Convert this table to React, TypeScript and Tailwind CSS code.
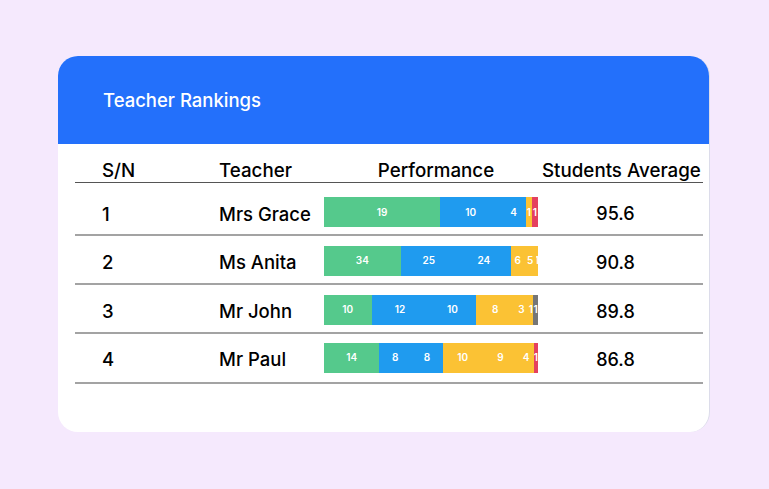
const SEG_COLORS: Record<string, string> = {
  g: 'bg-[#55c98c]',
  b: 'bg-[#1f9bef]',
  y: 'bg-[#fbc234]',
  r: 'bg-[#e4405f]',
  k: 'bg-[#767676]',
};

type Segment = { v: number; c: keyof typeof SEG_COLORS };

const rows: { sn: number; name: string; avg: string; segs: Segment[] }[] = [
  {
    sn: 1,
    name: 'Mrs Grace',
    avg: '95.6',
    segs: [
      { v: 19, c: 'g' },
      { v: 10, c: 'b' },
      { v: 4, c: 'b' },
      { v: 1, c: 'y' },
      { v: 1, c: 'r' },
    ],
  },
  {
    sn: 2,
    name: 'Ms Anita',
    avg: '90.8',
    segs: [
      { v: 34, c: 'g' },
      { v: 25, c: 'b' },
      { v: 24, c: 'b' },
      { v: 6, c: 'y' },
      { v: 5, c: 'y' },
      { v: 1, c: 'y' },
    ],
  },
  {
    sn: 3,
    name: 'Mr John',
    avg: '89.8',
    segs: [
      { v: 10, c: 'g' },
      { v: 12, c: 'b' },
      { v: 10, c: 'b' },
      { v: 8, c: 'y' },
      { v: 3, c: 'y' },
      { v: 1, c: 'y' },
      { v: 1, c: 'k' },
    ],
  },
  {
    sn: 4,
    name: 'Mr Paul',
    avg: '86.8',
    segs: [
      { v: 14, c: 'g' },
      { v: 8, c: 'b' },
      { v: 8, c: 'b' },
      { v: 10, c: 'y' },
      { v: 9, c: 'y' },
      { v: 4, c: 'y' },
      { v: 1, c: 'r' },
    ],
  },
];

function StackedBar({ segs }: { segs: Segment[] }) {
  const total = segs.reduce((s, x) => s + x.v, 0);
  return (
    <div className="flex h-[30px] w-[214px] overflow-hidden">
      {segs.map((s, i) => (
        <div
          key={i}
          className={`${SEG_COLORS[s.c]} flex items-center justify-center text-[10px] font-semibold text-white overflow-hidden`}
          style={{ width: `${(s.v / total) * 100}%` }}
        >
          {s.v}
        </div>
      ))}
    </div>
  );
}

export default function App() {
  return (
    <div
      className="w-[769px] h-[489px] bg-[#f5e9fd] pt-[56px] pl-[58px]"
      style={{ fontFamily: 'Inter, "Noto Sans", sans-serif' }}
    >
      <div className="w-[652px] h-[376px] bg-white rounded-[20px] overflow-hidden border-r border-[#dcdcea]">
        {/* Header */}
        <div className="h-[88px] bg-[#2370fb] flex items-center pl-[45px] pt-[2px]">
          <h1 className="text-[18.5px] font-medium text-white">Teacher Rankings</h1>
        </div>

        {/* Table */}
        <div className="pl-[17px] pr-[6px]">
          <div className="grid grid-cols-[144px_105px_218px_161px] items-end h-[39px] pb-[1px] border-b border-[#555] text-[18.75px] leading-none font-medium text-black">
            <div className="pl-[27px]">S/N</div>
            <div>Teacher</div>
            <div className="text-center pl-[6px]">Performance</div>
            <div className="whitespace-nowrap">Students Average</div>
          </div>
          {rows.map((r, i) => (
            <div
              key={r.sn}
              className={`grid grid-cols-[144px_105px_218px_161px] items-center border-b-2 border-[#a3a3a3] text-[18.5px] font-medium text-black ${
                i === 0 ? 'h-[53px] pt-[7px]' : i === 3 ? 'h-[50px] pb-[1px]' : 'h-[49px] pt-[2px]'
              }`}
            >
              <div className="pl-[27px] pt-[5px]">{r.sn}</div>
              <div className="whitespace-nowrap pt-[5px]">{r.name}</div>
              <div>
                <StackedBar segs={r.segs} />
              </div>
              <div className="text-center pr-[14px] text-[18px] pt-[3px]">{r.avg}</div>
            </div>
          ))}
        </div>
      </div>
    </div>
  );
}
